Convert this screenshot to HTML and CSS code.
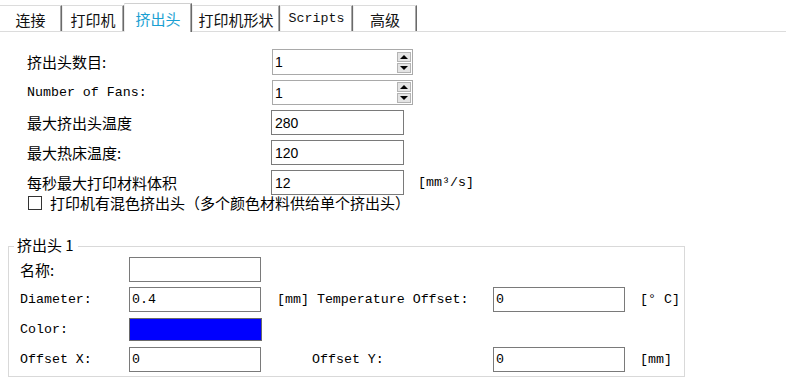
FILE: index.html
```html
<!DOCTYPE html>
<html>
<head>
    <meta charset="UTF-8">
    <title>挤出头设置</title>
    <link rel="stylesheet" href="styles.css">
</head>
<body>
    <!-- 选项卡 -->
    <div class="tabs">
        <div class="tab w1">连接</div>
        <div class="tab w2">打印机</div>
        <div class="tab w3 active">挤出头</div>
        <div class="tab w4">打印机形状</div>
        <div class="tab w5 en">Scripts</div>
        <div class="tab w6">高级</div>
    </div>

    <div class="settings">
        <label class="zh">挤出头数目:</label>
        <div class="spin">
            <input class="spin-val" value="1">
            <span class="arrows"><i class="up"></i><i class="down"></i></span>
        </div>
        <span></span>

        <label class="en">Number of Fans:</label>
        <div class="spin">
            <input class="spin-val" value="1">
            <span class="arrows"><i class="up"></i><i class="down"></i></span>
        </div>
        <span></span>

        <label class="zh">最大挤出头温度</label>
        <input class="box" value="280">
        <span></span>

        <label class="zh">最大热床温度:</label>
        <input class="box" value="120">
        <span></span>

        <label class="zh">每秒最大打印材料体积</label>
        <input class="box" value="12">
        <span class="en unit">[mm³/s]</span>
    </div>

    <div class="check-row">
        <input type="checkbox" class="check">
        <span class="zh">打印机有混色挤出头（多个颜色材料供给单个挤出头）</span>
    </div>

    <div class="group">
        <span class="group-title zh">挤出头 1</span>

        <label class="zh">名称:</label>
        <input class="box2" value="">
        <span></span><span></span><span></span>

        <label class="en">Diameter:</label>
        <input class="box2" value="0.4">
        <span class="en">[mm] Temperature Offset:</span>
        <input class="box2" value="0">
        <span class="en">[° C]</span>

        <label class="en">Color:</label>
        <div class="color"></div>
        <span></span><span></span><span></span>

        <label class="en">Offset X:</label>
        <input class="box2" value="0">
        <span class="en indent">Offset Y:</span>
        <input class="box2" value="0">
        <span class="en">[mm]</span>
    </div>
</body>
</html>
```

FILE: styles.css
```css
* {
    margin: 0;
    padding: 0;
    box-sizing: border-box;
}

body {
    background: #fff;
    color: #000;
    width: 786px;
    height: 382px;
    overflow: hidden;
}

.zh {
    font-family: "Noto Sans CJK SC", sans-serif;
    font-size: 15px;
    line-height: 16px;
}

.en {
    font-family: "Liberation Mono", "Noto Sans CJK SC", monospace;
    font-size: 13.3px;
    line-height: 16px;
}

/* 选项卡 */
.tabs {
    display: flex;
    align-items: flex-end;
    height: 32px;
    border-bottom: 1px solid #dcdcdc;
}

.tab {
    height: 26px;
    display: flex;
    align-items: center;
    justify-content: center;
    padding-top: 1px;
    background: #fff;
    border-top: 1px solid #dcdcdc;
    border-left: 1px solid #ececec;
    border-right: 1px solid #6a6a6a;
    box-shadow: inset -1px 0 #a8a8a8;
    font-family: "Noto Sans CJK SC", sans-serif;
    font-size: 15px;
    color: #111;
}

.tab.en {
    font-family: "Liberation Mono", monospace;
    font-size: 13.3px;
}

.tab.active {
    height: 29px;
    margin-bottom: -1px;
    color: #1a9fd2;
    border-top-color: #d0d0d0;
}

.w1 { width: 62px; border-left: none; }
.w2 { width: 62px; }
.w3 { width: 68px; }
.w4 { width: 88px; }
.w5 { width: 73px; }
.w6 { width: 64px; }

/* 基本设置 */
.settings {
    display: grid;
    grid-template-columns: 244px 142px auto;
    grid-template-rows: 26px 25px 25px 25px 25px;
    row-gap: 5px;
    align-items: center;
    margin-top: 17px;
    padding-left: 27px;
}

.box {
    width: 133px;
    height: 25px;
    border: 1px solid #7a7a7a;
    padding: 0 3px;
    font-family: "Liberation Sans", sans-serif;
    font-size: 14px;
    color: #000;
    outline: none;
}

.spin {
    display: flex;
    align-items: center;
    width: 141px;
    height: 100%;
    margin-left: 1px;
    border: 1px solid #a9a9a9;
    padding-right: 1px;
}

.spin-val {
    flex: 1;
    min-width: 0;
    border: none;
    padding: 0 2px;
    font-family: "Liberation Sans", sans-serif;
    font-size: 14px;
    outline: none;
}

.arrows {
    display: flex;
    flex-direction: column;
    gap: 1px;
    width: 14px;
}

.arrows i {
    display: flex;
    align-items: center;
    justify-content: center;
    height: 10px;
    background: #e4e4e4;
    border: 1px solid #b4b4b4;
}

.arrows i::after {
    content: "";
    border-left: 4px solid transparent;
    border-right: 4px solid transparent;
}

.arrows .up::after { border-bottom: 4px solid #000; }
.arrows .down::after { border-top: 4px solid #000; }

.unit {
    padding-left: 5px;
}

.check-row {
    display: flex;
    align-items: center;
    gap: 8px;
    height: 14px;
    margin-top: 1px;
    padding-left: 28px;
}

.check {
    appearance: none;
    width: 14px;
    height: 14px;
    border: 1px solid #333;
    background: #fff;
}

/* 挤出头分组 */
.group {
    position: relative;
    display: grid;
    grid-template-columns: 109px 148px 216px 147px auto;
    grid-template-rows: repeat(4, 25px);
    row-gap: 5px;
    align-items: center;
    width: 677px;
    margin: 36px 0 0 8px;
    padding: 10px 0 4px 11px;
    border: 1px solid #d9d9d9;
}

.group-title {
    position: absolute;
    top: -10px;
    left: 5px;
    padding: 0 4px 0 3px;
    background: #fff;
}

.box2 {
    width: 132px;
    height: 25px;
    border: 1px solid #7a7a7a;
    padding: 0 2px;
    font-family: "Liberation Mono", monospace;
    font-size: 13.3px;
    color: #000;
    outline: none;
}

.color {
    width: 133px;
    height: 23px;
    background: #0000ff;
    border: 1px solid #6a6a6a;
}

.indent {
    padding-left: 35px;
}
```
